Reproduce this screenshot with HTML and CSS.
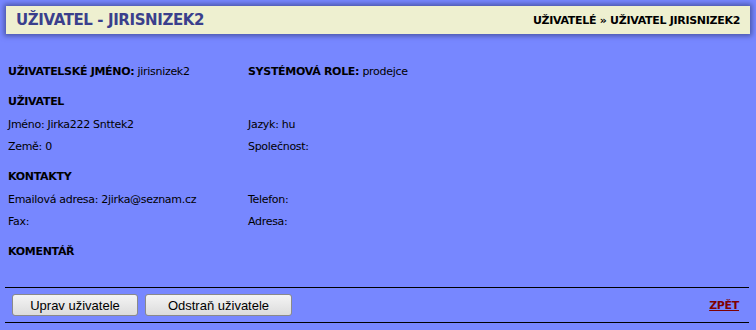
FILE: index.html
```html
<!DOCTYPE html>
<html>
<head>
  <meta charset="utf-8">
  <title>Uživatel - jirisnizek2</title>
  <link rel="stylesheet" href="styles.css">
</head>
<body>
  <div class="titlebar">
    <h1>UŽIVATEL - JIRISNIZEK2</h1>
    <div class="crumbs">UŽIVATELÉ » UŽIVATEL JIRISNIZEK2</div>
  </div>

  <div class="content">
    <div class="row top">
      <div class="cell"><b>UŽIVATELSKÉ JMÉNO:</b> jirisnizek2</div>
      <div class="cell"><b>SYSTÉMOVÁ ROLE:</b> prodejce</div>
    </div>

    <h2>UŽIVATEL</h2>
    <div class="row">
      <div class="cell">Jméno: Jirka222 Snttek2</div>
      <div class="cell">Jazyk: hu</div>
    </div>
    <div class="row">
      <div class="cell">Země: 0</div>
      <div class="cell">Společnost:</div>
    </div>

    <h2>KONTAKTY</h2>
    <div class="row">
      <div class="cell">Emailová adresa: 2jirka@seznam.cz</div>
      <div class="cell">Telefon:</div>
    </div>
    <div class="row">
      <div class="cell">Fax:</div>
      <div class="cell">Adresa:</div>
    </div>

    <h2>KOMENTÁŘ</h2>
  </div>

  <div class="actions">
    <button>Uprav uživatele</button>
    <button class="wide">Odstraň uživatele</button>
    <a href="#" class="back">ZPĚT</a>
  </div>
</body>
</html>
```

FILE: styles.css
```css
body {
  margin: 0;
  background: #7787ff;
  font-family: Tahoma, "DejaVu Sans", sans-serif;
  font-size: 11px;
  letter-spacing: -0.3px;
  color: #000;
}
.titlebar {
  margin: 6px 6px 0 6px;
  height: 28px;
  background: #eef0d0;
  box-shadow: 0 0 5px 2px #4a55a8;
  display: flex;
  align-items: center;
  justify-content: space-between;
  padding: 0 10px;
}
.titlebar h1 {
  margin: 0;
  font-size: 15px;
  letter-spacing: -0.4px;
  color: #3a3f8c;
}
.crumbs {
  font-size: 11px;
  font-weight: bold;
}
.content {
  padding: 26px 8px 0 8px;
}
.row {
  display: flex;
  height: 22px;
  align-items: center;
}
.row.top {
  margin-bottom: 9px;
}
.cell {
  width: 240px;
}
h2 {
  margin: 0;
  font-size: 11px;
  height: 22px;
  line-height: 22px;
}
.content .row + h2 {
  margin-top: 9px;
}
.actions {
  margin: 24px 7px 0 5px;
  border-top: 1px solid #000;
  border-bottom: 1px solid #000;
  height: 34px;
  display: flex;
  align-items: center;
  padding: 0 10px 0 7px;
  gap: 7px;
}
button {
  font-family: "Liberation Sans", Arial, sans-serif;
  font-size: 13px;
  letter-spacing: 0;
  height: 22px;
  width: 126px;
  background: linear-gradient(#f4f4f4, #dcdcdc);
  border: 1px solid #8a8a8a;
  border-radius: 3px;
  padding: 0;
}
button.wide {
  width: 147px;
}
.back {
  margin-left: auto;
  color: #800000;
  font-weight: bold;
  font-size: 11px;
}
```
